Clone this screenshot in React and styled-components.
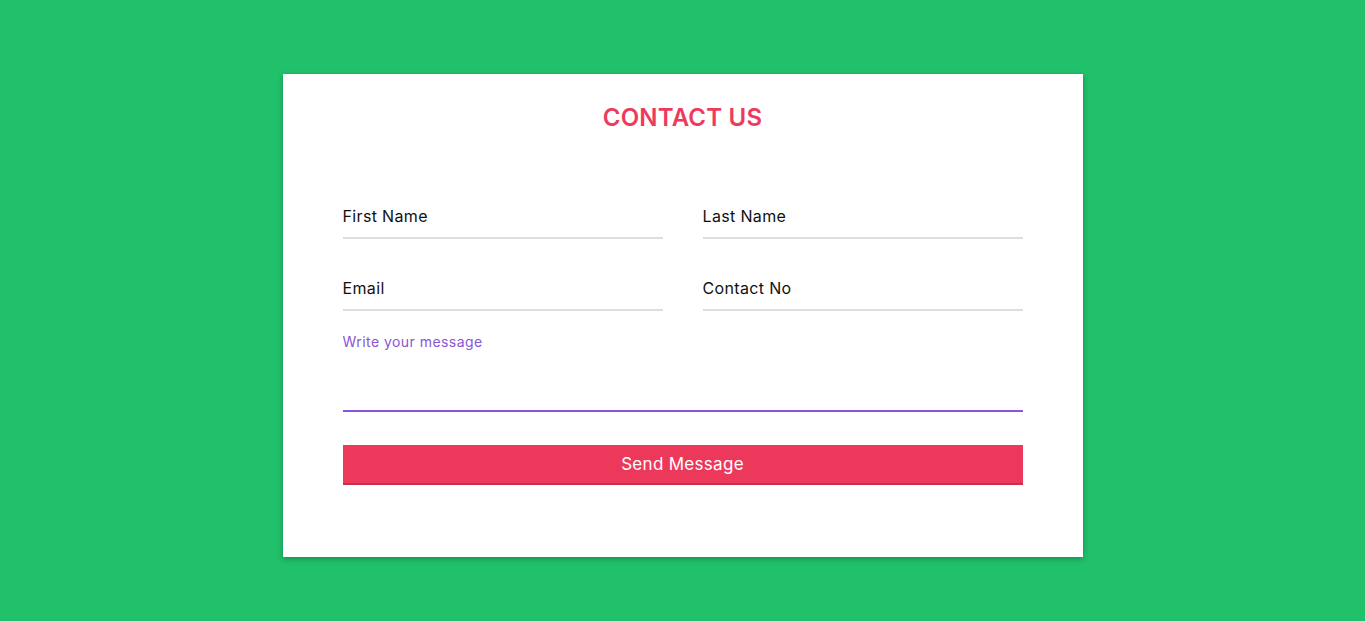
import React from "react";
import styled, { createGlobalStyle } from "styled-components";

const Global = createGlobalStyle`
  html, body { margin: 0; padding: 0; }
  body {
    background: #21c16b;
    font-family: Inter, "Noto Sans", "Liberation Sans", sans-serif;
  }
  * { box-sizing: border-box; }
`;

const Page = styled.div`
  min-height: 621px;
  display: flex;
  justify-content: center;
  align-items: flex-start;
  padding-top: 74px;
`;

const Card = styled.form`
  width: 800px;
  background: #fff;
  padding: 26px 60px 72px;
  box-shadow: 0 2px 6px rgba(0, 0, 0, 0.28);
  display: flex;
  flex-direction: column;
`;

const Title = styled.h2`
  margin: 0 0 58px;
  text-align: center;
  font-size: 24px;
  line-height: 36px;
  font-weight: 600;
  color: #ee3a5c;
  letter-spacing: 0.2px;
`;

const Grid = styled.div`
  display: grid;
  grid-template-columns: 1fr 1fr;
  column-gap: 40px;
  row-gap: 27px;
`;

const Input = styled.input`
  width: 100%;
  height: 45px;
  padding: 0;
  border: none;
  border-bottom: 2px solid #dedede;
  font-family: inherit;
  font-size: 16px;
  letter-spacing: 0.35px;
  color: #222;
  outline: none;
  background: transparent;
  &::placeholder { color: #111; opacity: 1; }
`;

const Message = styled.textarea`
  margin-top: 21px;
  width: 100%;
  height: 80px;
  padding: 0;
  border: none;
  border-bottom: 2px solid #8a55d6;
  font-family: inherit;
  font-size: 14px;
  line-height: 20px;
  letter-spacing: 0.45px;
  resize: none;
  outline: none;
  &::placeholder { color: #8a55d6; opacity: 1; }
`;

const Button = styled.button`
  margin-top: 33px;
  width: 100%;
  height: 40px;
  border: none;
  border-bottom: 2px solid #c8304f;
  background: #ec395b;
  color: #fff;
  font-family: inherit;
  font-size: 17px;
  letter-spacing: 0.3px;
  cursor: pointer;
`;

export default function App() {
  return (
    <>
      <Global />
      <Page>
        <Card onSubmit={(e) => e.preventDefault()}>
          <Title>CONTACT US</Title>
          <Grid>
            <Input placeholder="First Name" />
            <Input placeholder="Last Name" />
            <Input placeholder="Email" />
            <Input placeholder="Contact No" />
          </Grid>
          <Message placeholder="Write your message" />
          <Button type="submit">Send Message</Button>
        </Card>
      </Page>
    </>
  );
}
